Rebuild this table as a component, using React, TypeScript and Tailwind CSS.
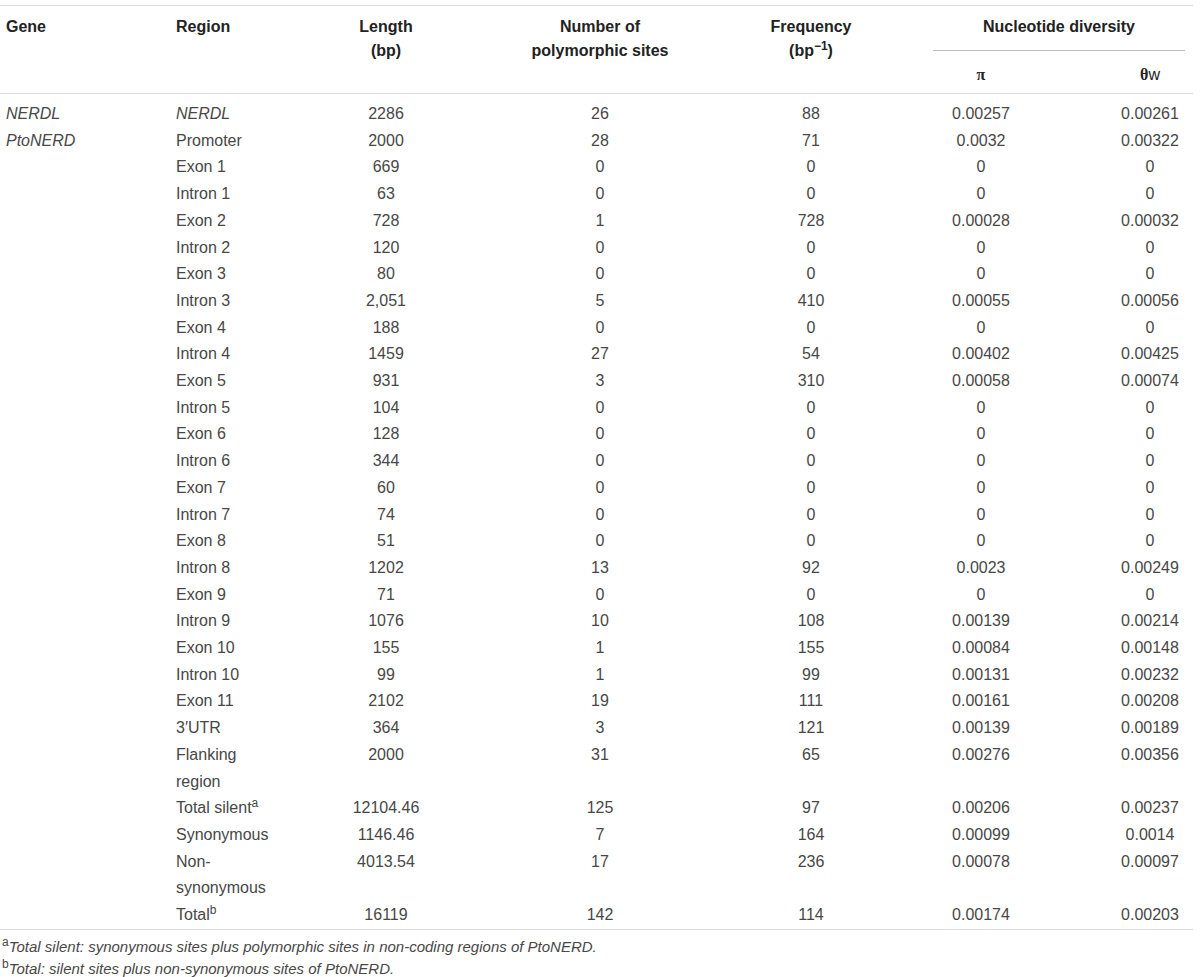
import React from 'react';

type Row = {
  gene?: string;
  geneItalic?: boolean;
  region: string;
  regionItalic?: boolean;
  sup?: string;
  length: string;
  sites: string;
  freq: string;
  pi: string;
  theta: string;
};

const zero = (region: string, length: string): Row => ({
  region,
  length,
  sites: '0',
  freq: '0',
  pi: '0',
  theta: '0',
});

const rows: Row[] = [
  { gene: 'NERDL', geneItalic: true, region: 'NERDL', regionItalic: true, length: '2286', sites: '26', freq: '88', pi: '0.00257', theta: '0.00261' },
  { gene: 'PtoNERD', geneItalic: true, region: 'Promoter', length: '2000', sites: '28', freq: '71', pi: '0.0032', theta: '0.00322' },
  zero('Exon 1', '669'),
  zero('Intron 1', '63'),
  { region: 'Exon 2', length: '728', sites: '1', freq: '728', pi: '0.00028', theta: '0.00032' },
  zero('Intron 2', '120'),
  zero('Exon 3', '80'),
  { region: 'Intron 3', length: '2,051', sites: '5', freq: '410', pi: '0.00055', theta: '0.00056' },
  zero('Exon 4', '188'),
  { region: 'Intron 4', length: '1459', sites: '27', freq: '54', pi: '0.00402', theta: '0.00425' },
  { region: 'Exon 5', length: '931', sites: '3', freq: '310', pi: '0.00058', theta: '0.00074' },
  zero('Intron 5', '104'),
  zero('Exon 6', '128'),
  zero('Intron 6', '344'),
  zero('Exon 7', '60'),
  zero('Intron 7', '74'),
  zero('Exon 8', '51'),
  { region: 'Intron 8', length: '1202', sites: '13', freq: '92', pi: '0.0023', theta: '0.00249' },
  zero('Exon 9', '71'),
  { region: 'Intron 9', length: '1076', sites: '10', freq: '108', pi: '0.00139', theta: '0.00214' },
  { region: 'Exon 10', length: '155', sites: '1', freq: '155', pi: '0.00084', theta: '0.00148' },
  { region: 'Intron 10', length: '99', sites: '1', freq: '99', pi: '0.00131', theta: '0.00232' },
  { region: 'Exon 11', length: '2102', sites: '19', freq: '111', pi: '0.00161', theta: '0.00208' },
  { region: '3′UTR', length: '364', sites: '3', freq: '121', pi: '0.00139', theta: '0.00189' },
  { region: 'Flanking region', length: '2000', sites: '31', freq: '65', pi: '0.00276', theta: '0.00356' },
  { region: 'Total silent', sup: 'a', length: '12104.46', sites: '125', freq: '97', pi: '0.00206', theta: '0.00237' },
  { region: 'Synonymous', length: '1146.46', sites: '7', freq: '164', pi: '0.00099', theta: '0.0014' },
  { region: 'Non-synonymous', length: '4013.54', sites: '17', freq: '236', pi: '0.00078', theta: '0.00097' },
  { region: 'Total', sup: 'b', length: '16119', sites: '142', freq: '114', pi: '0.00174', theta: '0.00203' },
];

const cols = 'grid grid-cols-[176px_100px_220px_208px_214px_126px_149px]';

const App = () => {
  return (
    <div className="w-[1200px] min-h-[977px] bg-white pt-[5px] font-['Liberation_Sans',Arial,sans-serif]">
      <div className="w-[1193px]">
        {/* header */}
        <div className={`${cols} border-t border-b border-[#dcdcdc] text-[16px] font-bold leading-[24px] text-[#222]`}>
          <div className="row-span-2 pl-[6px] pt-[9px]">Gene</div>
          <div className="row-span-2 pt-[9px]">Region</div>
          <div className="row-span-2 pt-[9px] text-center">
            Length
            <br />
            (bp)
          </div>
          <div className="row-span-2 pt-[9px] text-center">
            Number of
            <br />
            polymorphic sites
          </div>
          <div className="row-span-2 pt-[9px] text-center">
            Frequency
            <br />
            (bp<sup className="text-[12px]">−1</sup>)
          </div>
          <div className="col-span-2 pt-[9px]">
            <div className="ml-[15px] mr-[8px] border-b border-[#bdbdbd] pb-[11px] text-center">Nucleotide diversity</div>
          </div>
          <div className="pt-[12px] pb-[6px] text-center font-['Liberation_Serif',serif]">π</div>
          <div className="pt-[12px] pb-[6px] pl-[63px] text-center">
            <span className="font-['Liberation_Serif',serif]">θ</span>
            <span className="font-normal">w</span>
          </div>
        </div>

        {/* body */}
        <div className="border-b border-[#dcdcdc] pt-[7px] text-[16px] leading-[26.7px] text-[#474747]">
          {rows.map((r, i) => (
            <div key={i} className={cols}>
              <div className={`pl-[6px] ${r.geneItalic ? 'italic' : ''}`}>{r.gene}</div>
              <div className={r.regionItalic ? 'italic' : ''}>
                {r.region}
                {r.sup && <sup className="text-[12px]">{r.sup}</sup>}
              </div>
              <div className="text-center">{r.length}</div>
              <div className="text-center">{r.sites}</div>
              <div className="text-center">{r.freq}</div>
              <div className="text-center">{r.pi}</div>
              <div className="pl-[63px] text-center">{r.theta}</div>
            </div>
          ))}
        </div>

        {/* footnotes */}
        <div className="pt-[6px] pl-[2px] text-[15px] leading-[22px] text-[#474747]">
          <div>
            <sup className="text-[12px]">a</sup>
            <span className="italic">Total silent: synonymous sites plus polymorphic sites in non-coding regions of PtoNERD.</span>
          </div>
          <div>
            <sup className="text-[12px]">b</sup>
            <span className="italic">Total: silent sites plus non-synonymous sites of PtoNERD.</span>
          </div>
        </div>
      </div>
    </div>
  );
};

export default App;
